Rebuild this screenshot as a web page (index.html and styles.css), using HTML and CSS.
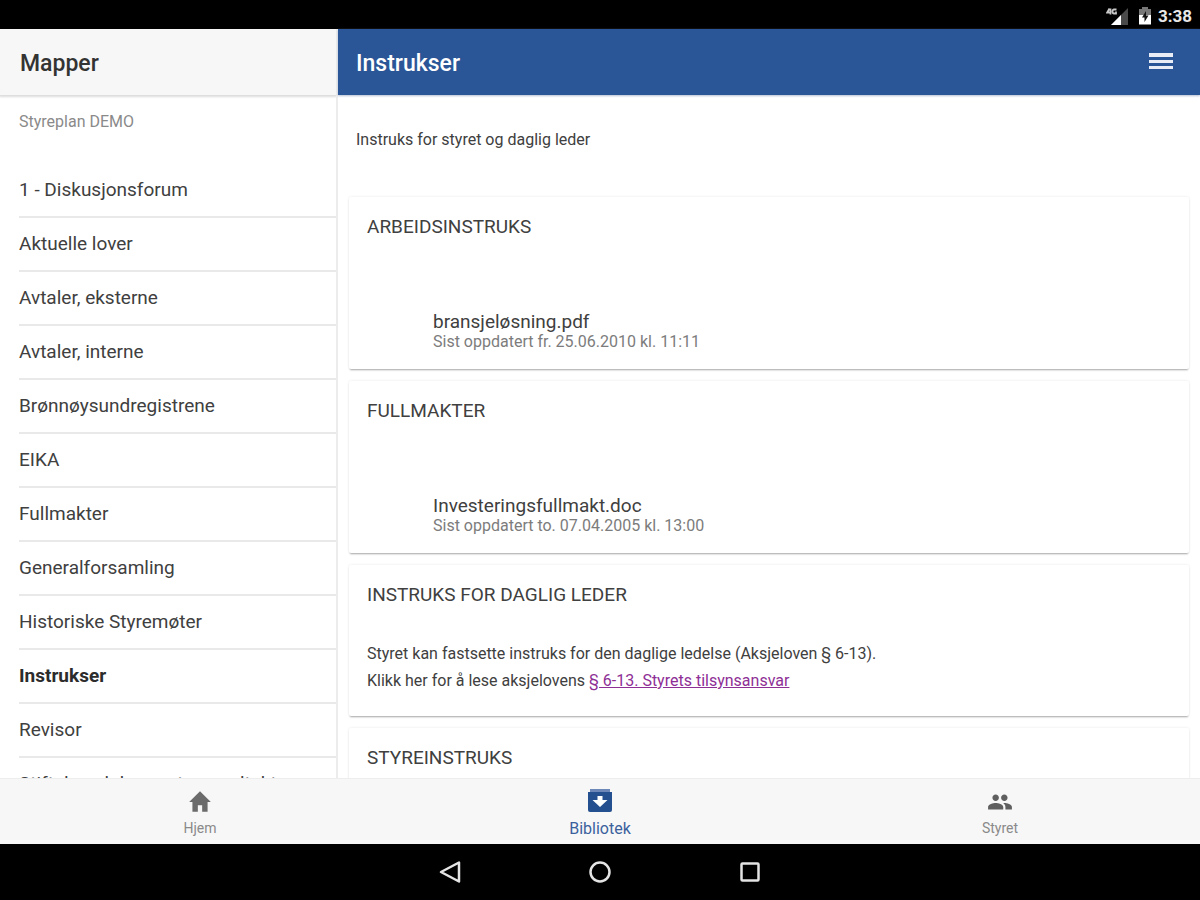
FILE: index.html
```html
<!DOCTYPE html>
<html lang="no">
<head>
<meta charset="utf-8">
<title>Instrukser</title>
<link rel="stylesheet" href="styles.css">
</head>
<body>
<div class="status">
  <svg class="status-signal" width="24" height="20" viewBox="0 0 24 20" aria-hidden="true">
    <path d="M22 2v17H5z" fill="#4a4a4a"/><path d="M15 9v10H5z" fill="#fff"/>
    <path d="M3.500 2.500L1.200 6.500h4M4.500 2.500v6M10.500 3.500H8Q6.500 3.500 6.500 5.500T8 7.500h2V5.500" fill="none" stroke="#c8c8c8" stroke-width="1.800"/>
  </svg>
  <svg width="14" height="20" viewBox="0 0 14 20" aria-hidden="true">
    <path d="M4 1h6v2h3v7H1V3h3z" fill="#777"/><path d="M1 9h12v9.500H1z" fill="#fff"/>
    <path d="M8 5l-4 6.500h2.500V16l4-6.500H8z" fill="#111"/>
  </svg>
  <span>3:38</span>
</div>
<div class="app">
  <aside class="sidebar">
    <header class="side-bar"><h2 class="title title-side">Mapper</h2></header>
    <p class="org">Styreplan DEMO</p>
    <nav class="folders" aria-label="Mapper">
      <a class="folder" href="#">1 - Diskusjonsforum</a>
      <a class="folder" href="#">Aktuelle lover</a>
      <a class="folder" href="#">Avtaler, eksterne</a>
      <a class="folder" href="#">Avtaler, interne</a>
      <a class="folder" href="#">Brønnøysundregistrene</a>
      <a class="folder" href="#">EIKA</a>
      <a class="folder" href="#">Fullmakter</a>
      <a class="folder" href="#">Generalforsamling</a>
      <a class="folder" href="#">Historiske Styremøter</a>
      <a class="folder folder-active" href="#" aria-current="page">Instrukser</a>
      <a class="folder" href="#">Revisor</a>
      <a class="folder" href="#">Stiftelsesdokumenter - vedtekter</a>
    </nav>
  </aside>
  <main class="main">
    <header class="toolbar">
      <h1 class="title">Instrukser</h1>
      <button class="menu" aria-label="Meny">
        <svg width="24" height="18" viewBox="0 0 24 18"><path d="M0 0h24v4H0zM0 7h24v3H0zM0 13h24v3H0z" fill="#e8edf6"/></svg>
      </button>
    </header>
    <div class="content">
      <p class="intro">Instruks for styret og daglig leder</p>
      <section class="card">
        <h3 class="card-title">ARBEIDSINSTRUKS</h3>
        <a class="file" href="#"><span class="file-name">bransjeløsning.pdf</span><span class="file-date">Sist oppdatert fr. 25.06.2010 kl. 11:11</span></a>
      </section>
      <section class="card">
        <h3 class="card-title">FULLMAKTER</h3>
        <a class="file" href="#"><span class="file-name">Investeringsfullmakt.doc</span><span class="file-date">Sist oppdatert to. 07.04.2005 kl. 13:00</span></a>
      </section>
      <section class="card">
        <h3 class="card-title">INSTRUKS FOR DAGLIG LEDER</h3>
        <p class="card-text">Styret kan fastsette instruks for den daglige ledelse (Aksjeloven § 6-13).<br>Klikk her for å lese aksjelovens <a class="law" href="#">§ 6-13. Styrets tilsynsansvar</a></p>
      </section>
      <section class="card">
        <h3 class="card-title">STYREINSTRUKS</h3>
      </section>
    </div>
  </main>
</div>
<nav class="tabs" aria-label="Faner">
  <a class="tab" href="#">
    <svg width="26" height="26" viewBox="0 0 24 24"><path d="M10 21v-6h4v6h5v-9h3L12 2 2 12h3v9z" fill="#6b6b6b"/></svg>
    <span>Hjem</span>
  </a>
  <a class="tab tab-active" href="#" aria-current="page">
    <svg width="26" height="26" viewBox="0 1 26 26"><path d="M3 1h20v3H3z" fill="#6d88b8"/><path d="M1 4h24v18q0 2-2 2H3q-2 0-2-2z" fill="#24508f"/><path d="M10.500 8h5v4h5L13 19l-7.500-7h5z" fill="#fff"/></svg>
    <span>Bibliotek</span>
  </a>
  <a class="tab" href="#">
    <svg width="26" height="26" viewBox="0 0 24 24"><path d="M16 11c1.660 0 2.990-1.340 2.990-3S17.660 5 16 5s-3 1.340-3 3 1.340 3 3 3zm-8 0c1.660 0 2.990-1.340 2.990-3S9.660 5 8 5 5 6.340 5 8s1.340 3 3 3zm0 2c-2.330 0-7 1.170-7 3.500V19h14v-2.500c0-2.330-4.670-3.500-7-3.500zm8 0c-.290 0-.620.020-.970.050 1.160.840 1.970 1.970 1.970 3.450V19h6v-2.500c0-2.330-4.670-3.500-7-3.500z" fill="#5f5f5f"/></svg>
    <span>Styret</span>
  </a>
</nav>
<div class="system">
  <button class="key" aria-label="Tilbake"><svg width="24" height="24" viewBox="0 0 24 24"><path d="M21 2.500v19L3 12z"/></svg></button>
  <button class="key" aria-label="Hjem"><svg width="24" height="24" viewBox="0 0 24 24"><circle cx="12" cy="12" r="9.500"/></svg></button>
  <button class="key" aria-label="Oversikt"><svg width="24" height="24" viewBox="0 0 24 24"><rect x="3.500" y="3.500" width="17" height="17" rx="1"/></svg></button>
</div>
</body>
</html>
```
FILE: styles.css
```css
* { box-sizing: border-box; }
body {
  margin: 0;
  height: 100vh;
  display: flex;
  flex-direction: column;
  overflow: hidden;
  background: #fff;
  color: #404040;
  font-family: Roboto, "Liberation Sans", sans-serif;
  font-size: 19px;
}
h1, h2, h3, p { margin: 0; font-weight: 400; }
a { color: inherit; text-decoration: none; }
button { border: 0; padding: 0; background: none; display: flex; }

.status {
  flex: none;
  display: flex;
  align-items: center;
  justify-content: flex-end;
  gap: 6px;
  padding: 2px 8px 0;
  height: 29px;
  background: #000;
  color: #e8e8e8;
  font-size: 17px;
  font-weight: 700;
}
.status-signal { margin-right: 2px; }

.app { flex: 1; min-height: 0; display: flex; }
.sidebar {
  flex: none;
  width: calc(28% + 2px);
  min-width: 240px;
  overflow: hidden;
  border-right: 2px solid #ececec;
}
.main { flex: 1; min-width: 0; display: flex; flex-direction: column; }
.side-bar, .toolbar {
  flex: none;
  display: flex;
  align-items: center;
  justify-content: space-between;
  height: 66px;
}
.side-bar {
  padding: 0 20px;
  background: #f7f7f7;
  box-shadow: 0 1px 2px 1px #dcdcdc;
}
.toolbar {
  padding: 0 27px 0 18px;
  background: #2a5596;
  box-shadow: 0 1px 2px #b4c0d4;
}
.title { padding-top: 2px; font-size: 23px; font-weight: 500; color: #fff; }
.title-side { color: #333; }
.org { padding: 16px 19px 31px; line-height: 22px; font-size: 16px; color: #8a8a8a; }
.folders { display: flex; flex-direction: column; padding-left: 19px; }
.folder { height: 54px; line-height: 52px; border-bottom: 2px solid #e9e9e9; white-space: nowrap; }
.folder-active { font-weight: 700; color: #2c2c2c; }

.content { flex: 1; min-height: 0; overflow: hidden; padding: 0 11px; }
.intro { padding: 33px 7px 45px; line-height: 24px; font-size: 16px; }
.card {
  margin-bottom: 12px;
  padding: 18px 18px 17px;
  border-radius: 2px;
  background: #fff;
  box-shadow: 0 2px 2px -1px #a8a8a8, 0 0 3px #e8e8e8;
}
.card-title { line-height: 24px; font-size: 19px; }
.file { display: flex; flex-direction: column; padding: 73px 66px 0; }
.file-name { line-height: 20px; }
.file-date { line-height: 20px; font-size: 16px; color: #7c7c7c; }
.card-text { padding: 33px 0 5px; line-height: 27px; font-size: 16px; }
.law { color: #8e2f96; text-decoration: underline; }

.tabs {
  flex: none;
  display: flex;
  height: 66px;
  background: #f7f7f7;
  border-top: 1px solid #ededed;
}
.tab {
  flex: 1;
  display: flex;
  flex-direction: column;
  align-items: center;
  padding-top: 10px;
  gap: 3px;
  line-height: 21px;
  font-size: 14px;
  color: #8a8a8a;
}
.tab-active { color: #3b619d; font-size: 16px; }

.system {
  flex: none;
  display: flex;
  align-items: center;
  justify-content: center;
  gap: 126px;
  height: 56px;
  background: #000;
}
.key svg { fill: none; stroke: #e4e4e4; stroke-width: 2.5; stroke-linejoin: round; }
```
